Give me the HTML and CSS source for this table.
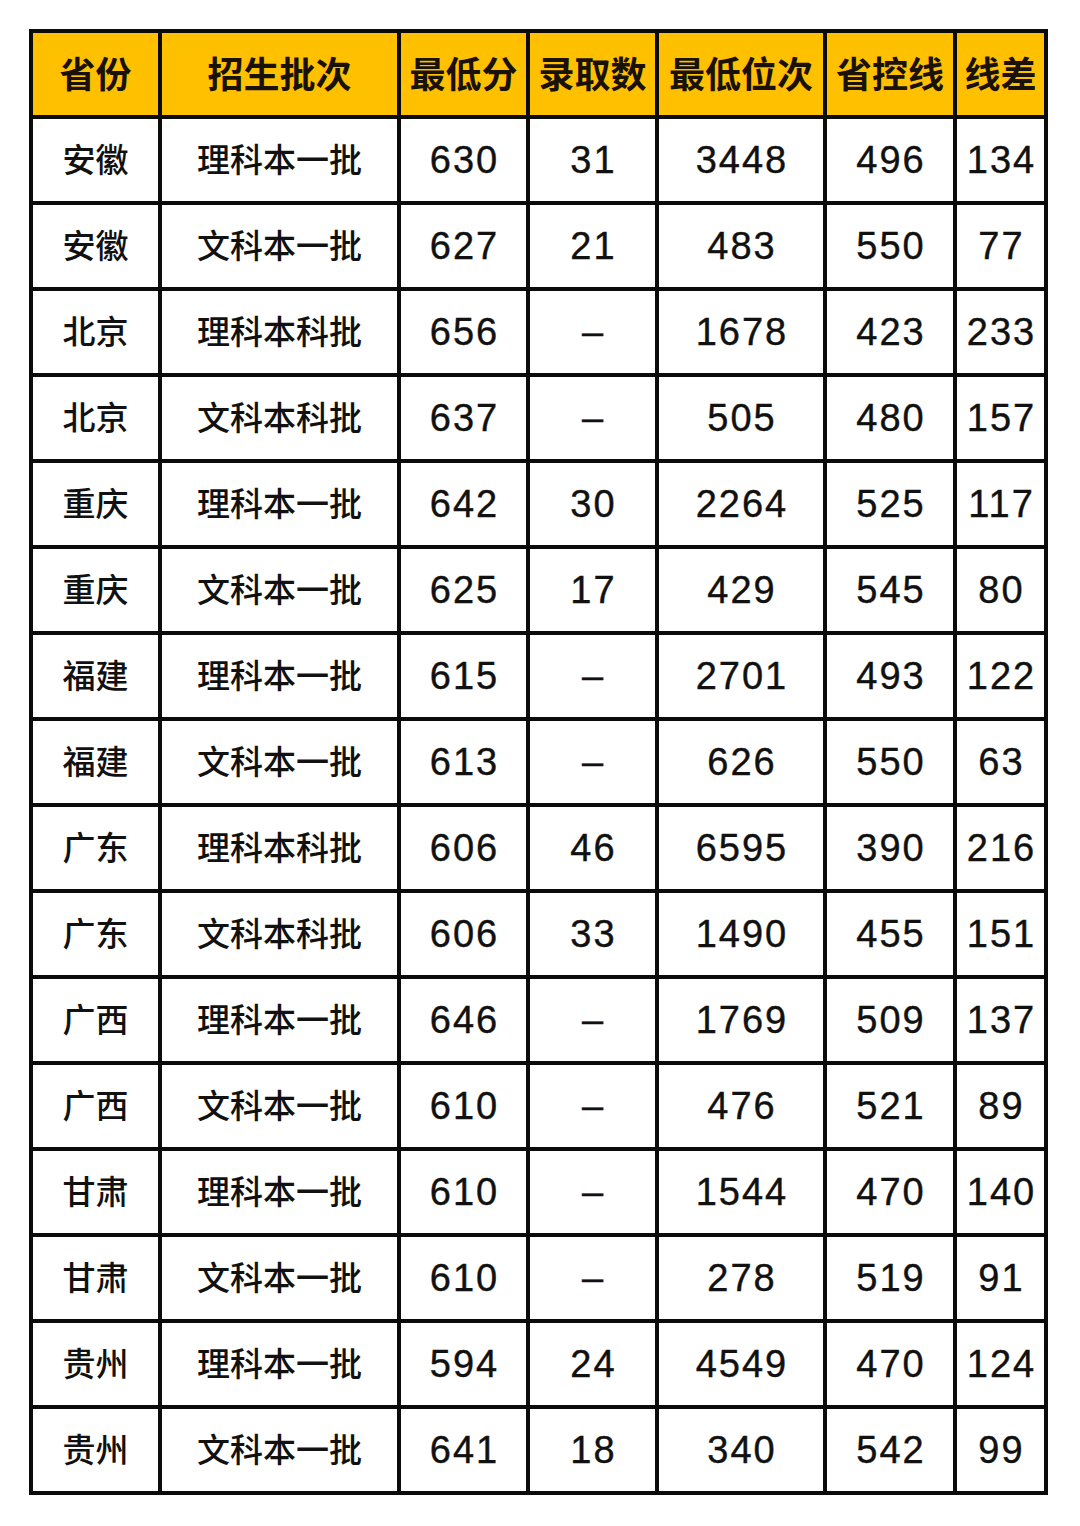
FILE: index.html
```html
<!DOCTYPE html>
<html lang="zh-CN">
<head>
<meta charset="utf-8">
<title>录取分数</title>
<link rel="stylesheet" href="styles.css">
</head>
<body>
<div class="table">
  <div class="h">省份</div><div class="h">招生批次</div><div class="h">最低分</div><div class="h">录取数</div><div class="h">最低位次</div><div class="h">省控线</div><div class="h">线差</div>

  <div class="zh">安徽</div><div class="zh">理科本一批</div><div class="n">630</div><div class="n">31</div><div class="n">3448</div><div class="n">496</div><div class="n">134</div>
  <div class="zh">安徽</div><div class="zh">文科本一批</div><div class="n">627</div><div class="n">21</div><div class="n">483</div><div class="n">550</div><div class="n">77</div>
  <div class="zh">北京</div><div class="zh">理科本科批</div><div class="n">656</div><div class="n">–</div><div class="n">1678</div><div class="n">423</div><div class="n">233</div>
  <div class="zh">北京</div><div class="zh">文科本科批</div><div class="n">637</div><div class="n">–</div><div class="n">505</div><div class="n">480</div><div class="n">157</div>
  <div class="zh">重庆</div><div class="zh">理科本一批</div><div class="n">642</div><div class="n">30</div><div class="n">2264</div><div class="n">525</div><div class="n">117</div>
  <div class="zh">重庆</div><div class="zh">文科本一批</div><div class="n">625</div><div class="n">17</div><div class="n">429</div><div class="n">545</div><div class="n">80</div>
  <div class="zh">福建</div><div class="zh">理科本一批</div><div class="n">615</div><div class="n">–</div><div class="n">2701</div><div class="n">493</div><div class="n">122</div>
  <div class="zh">福建</div><div class="zh">文科本一批</div><div class="n">613</div><div class="n">–</div><div class="n">626</div><div class="n">550</div><div class="n">63</div>
  <div class="zh">广东</div><div class="zh">理科本科批</div><div class="n">606</div><div class="n">46</div><div class="n">6595</div><div class="n">390</div><div class="n">216</div>
  <div class="zh">广东</div><div class="zh">文科本科批</div><div class="n">606</div><div class="n">33</div><div class="n">1490</div><div class="n">455</div><div class="n">151</div>
  <div class="zh">广西</div><div class="zh">理科本一批</div><div class="n">646</div><div class="n">–</div><div class="n">1769</div><div class="n">509</div><div class="n">137</div>
  <div class="zh">广西</div><div class="zh">文科本一批</div><div class="n">610</div><div class="n">–</div><div class="n">476</div><div class="n">521</div><div class="n">89</div>
  <div class="zh">甘肃</div><div class="zh">理科本一批</div><div class="n">610</div><div class="n">–</div><div class="n">1544</div><div class="n">470</div><div class="n">140</div>
  <div class="zh">甘肃</div><div class="zh">文科本一批</div><div class="n">610</div><div class="n">–</div><div class="n">278</div><div class="n">519</div><div class="n">91</div>
  <div class="zh">贵州</div><div class="zh">理科本一批</div><div class="n">594</div><div class="n">24</div><div class="n">4549</div><div class="n">470</div><div class="n">124</div>
  <div class="zh">贵州</div><div class="zh">文科本一批</div><div class="n">641</div><div class="n">18</div><div class="n">340</div><div class="n">542</div><div class="n">99</div>
</div>
</body>
</html>
```

FILE: styles.css
```css
html, body {
  margin: 0;
  padding: 0;
  background: #ffffff;
}

body {
  padding: 29px 0 0 29px;
}

.table {
  display: inline-grid;
  grid-template-columns: 125px 235px 125px 125px 164px 126px 87px;
  grid-auto-rows: 82px;
  gap: 4px;
  padding: 4px;
  background: #0b0b0b;
}

.table > div {
  display: flex;
  align-items: center;
  justify-content: center;
  background: #ffffff;
  color: #111111;
  white-space: nowrap;
  box-sizing: border-box;
}

.table > .h {
  background: #ffc000;
  color: #1a1208;
  font-family: "Noto Sans CJK SC", sans-serif;
  font-weight: 700;
  font-size: 36px;
  padding-bottom: 5px;
}

.zh {
  font-family: "Noto Sans CJK SC", sans-serif;
  font-weight: 500;
  font-size: 33px;
  padding-bottom: 4px;
}

.n {
  font-family: "Liberation Sans", Arial, sans-serif;
  font-weight: 400;
  font-size: 38px;
  letter-spacing: 2px;
  padding-left: 2px;
  -webkit-text-stroke: 0.4px #111111;
}
```
